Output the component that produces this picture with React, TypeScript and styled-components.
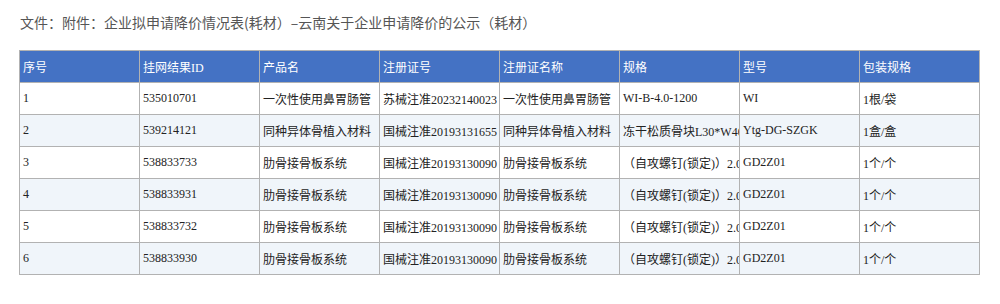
import React from 'react';
import styled, { createGlobalStyle } from 'styled-components';

const GlobalStyle = createGlobalStyle`
  body {
    margin: 0;
    background: #ffffff;
    font-family: "Liberation Serif", "Noto Sans CJK SC", serif;
  }
`;

const Page = styled.div`
  padding: 12px 19px;
`;

const Title = styled.div`
  font-family: "Noto Sans CJK SC", sans-serif;
  font-size: 14px;
  line-height: 20px;
  color: #555555;
  padding-left: 1px;
  margin-bottom: 18px;
`;

const Table = styled.table`
  width: 961px;
  table-layout: fixed;
  border-collapse: collapse;
  font-size: 12px;
`;

const HeadCell = styled.th`
  height: 31px;
  padding: 0 3px;
  background: #4472c4;
  color: #ffffff;
  font-weight: normal;
  text-align: left;
  border: 1px solid #b2b2b2;
  white-space: nowrap;
  overflow: hidden;
`;

const Row = styled.tr<{ $alt?: boolean }>`
  background: ${(p) => (p.$alt ? '#f0f5fa' : '#ffffff')};
`;

const Cell = styled.td`
  height: 31px;
  padding: 0 3px;
  color: #222222;
  border: 1px solid #b2b2b2;
  white-space: nowrap;
  overflow: hidden;
  text-overflow: clip;
`;

const columns = ['序号', '挂网结果ID', '产品名', '注册证号', '注册证名称', '规格', '型号', '包装规格'];

const rows = [
  ['1', '535010701', '一次性使用鼻胃肠管', '苏械注准20232140023', '一次性使用鼻胃肠管', 'WI-B-4.0-1200', 'WI', '1根/袋'],
  ['2', '539214121', '同种异体骨植入材料', '国械注准20193131655', '同种异体骨植入材料', '冻干松质骨块L30*W40*H10', 'Ytg-DG-SZGK', '1盒/盒'],
  ['3', '538833733', '肋骨接骨板系统', '国械注准20193130090', '肋骨接骨板系统', '（自攻螺钉(锁定)）2.0', 'GD2Z01', '1个/个'],
  ['4', '538833931', '肋骨接骨板系统', '国械注准20193130090', '肋骨接骨板系统', '（自攻螺钉(锁定)）2.0', 'GD2Z01', '1个/个'],
  ['5', '538833732', '肋骨接骨板系统', '国械注准20193130090', '肋骨接骨板系统', '（自攻螺钉(锁定)）2.0', 'GD2Z01', '1个/个'],
  ['6', '538833930', '肋骨接骨板系统', '国械注准20193130090', '肋骨接骨板系统', '（自攻螺钉(锁定)）2.0', 'GD2Z01', '1个/个'],
];

const App: React.FC = () => {
  return (
    <Page>
      <GlobalStyle />
      <Title>文件：附件：企业拟申请降价情况表(耗材）–云南关于企业申请降价的公示（耗材）</Title>
      <Table>
        <thead>
          <tr>
            {columns.map((c) => (
              <HeadCell key={c}>{c}</HeadCell>
            ))}
          </tr>
        </thead>
        <tbody>
          {rows.map((r, i) => (
            <Row key={r[0]} $alt={i % 2 === 1}>
              {r.map((v, j) => (
                <Cell key={j}>{v}</Cell>
              ))}
            </Row>
          ))}
        </tbody>
      </Table>
    </Page>
  );
};

export default App;
